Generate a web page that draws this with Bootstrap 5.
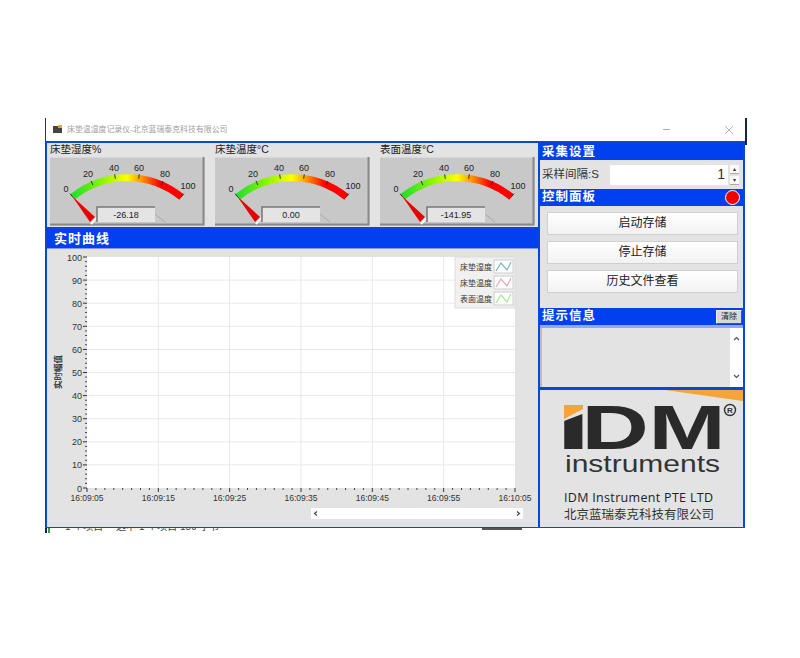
<!DOCTYPE html>
<html>
<head>
    <title>床垫温湿度记录仪</title>
    <link href="https://cdn.jsdelivr.net/npm/bootstrap@5.3.2/dist/css/bootstrap.min.css" rel="stylesheet">
    <script src="https://cdn.jsdelivr.net/npm/bootstrap@5.3.2/dist/js/bootstrap.bundle.min.js"></script>
    <style>
        body { background: #fff; font-family: "Liberation Sans", "Noto Sans CJK SC", sans-serif; color: #222; }
        .app-shell { width: 703px; margin: 118px 0 0 45px; }
        .title-strip { height: 23px; border-left: 1px solid #333; padding-left: 7px; font-size: 7.9px; color: #a0a0a0; margin-right: 0; width: 700px; }
        .title-strip .win-min { width: 7px; height: 1px; background: #aaa; margin-right: 55px; }
        .title-strip .win-close { margin-right: 12px; }
        .navy-edge { width: 2px; height: 27px; margin-bottom: -4px; background: #10264f; align-self: flex-start; }
        .main-frame { width: 700px; height: 387px; background: #0a46d8; border: 2px solid #0a46d8; border-bottom-width: 1px; gap: 2px; }
        .left-pane { width: 491px; }
        .right-pane { width: 203px; }
        .gauge-row { height: 84px; background: #e3e3e3; padding-left: 3px; gap: 9px; }
        .gauge-box { width: 156px; }
        .gauge-name { height: 14px; font-size: 10.5px; line-height: 13px; }
        .blue-head { background: #0040ee; color: #fff; font-family: "Liberation Serif", "Noto Sans CJK SC", serif; font-weight: 700; letter-spacing: 1px; }
        .head-big { height: 20px; font-size: 13px; line-height: 20px; padding-left: 7px; margin-top: 2px; border-bottom: 1px solid #7d9cf0; }
        .head-small { height: 17px; font-size: 12.5px; line-height: 19px; padding-left: 2px; }
        .chart-pane { height: 278px; background: #e3e3e3; }
        .sample-row { height: 29px; background: #e3e3e3; padding: 0 4px 0 2px; font-size: 11.5px; color: #333; }
        .sample-row span.sample-label { width: 69px; }
        .sample-input.form-control { width: 118px; height: 20px; border: 0; border-radius: 0; padding: 0 3px 0 0; font-size: 14px; text-align: right; color: #333; background: #fff; }
        .spin-wrap { width: 9px; margin-left: 2px; gap: 2px; }
        .spin-btn { height: 9px; background: #fafafa; border-bottom: 1px solid #aaa; font-size: 6px; line-height: 9px; text-align: center; color: #333; }
        .control-body { height: 102px; background: #e3e3e3; padding: 6px 5px 0 7px; gap: 6px; }
        .store-btn.btn { height: 23px; padding: 0; font-size: 12px; line-height: 21px; color: #222; background: linear-gradient(#fff, #f2f2f2); border: 1px solid #d0d0d0; border-radius: 0; }
        .red-lamp { width: 15px; height: 15px; border-radius: 50%; background: #f00000; border: 1px solid #fff; margin-right: 3px; }
        .clear-btn.btn { width: 26px; height: 14px; padding: 0; font-size: 8px; line-height: 12px; color: #222; background: #d8d8d8; border: 1px solid #777; border-color: #eee #555 #555 #eee; border-radius: 0; margin-right: 1px; font-family: "Liberation Sans", "Noto Sans CJK SC", sans-serif; letter-spacing: 0; font-weight: 400; }
        .note-area { height: 62px; background: #fff; border-top: 3px solid #8fa9ee; }
        .note-text { width: 190px; background: #e3e3e3; border-left: 2px solid #bbb; }
        .note-scroll { width: 13px; }
        .logo-pane { height: 137px; background: #e3e3e3; margin-top: 3px; }
        .leftover-strip { height: 5px; overflow: hidden; font-size: 10px; line-height: 10px; color: #444; }
        .leftover-strip .corner-mark { width: 20px; height: 5px; flex-shrink: 0; background: linear-gradient(90deg, #10264f 0 2px, #fff 2px 3px, #3a9a50 3px 5px, #fff 5px); }
        .leftover-strip .status-text { width: 417px; flex-shrink: 0; margin-top: -6px; white-space: nowrap; }
        .leftover-strip .dark-bar { width: 40px; height: 2px; background: #555; }
    </style>
</head>
<body>
    <div class="app-shell">
        <div class="d-flex">
            <div class="title-strip d-flex align-items-center">
                <svg width="10" height="9" viewBox="0 0 10 9" class="me-1"><rect y="1" width="9" height="7" fill="#444"/><rect x="5" width="4" height="3" fill="#e8a040"/></svg>
                <span class="flex-grow-1">床垫温湿度记录仪-北京蓝瑞泰克科技有限公司</span>
                <span class="win-min"></span>
                <svg class="win-close" width="8" height="8" viewBox="0 0 8 8"><path d="M0 0L8 8M8 0L0 8" stroke="#b5b5b5"/></svg>
            </div>
            <div class="navy-edge"></div>
        </div>
        <div class="main-frame d-flex">
            <div class="left-pane d-flex flex-column">
                <div class="gauge-row d-flex" id="gaugeRow"></div>
                <div class="blue-head head-big">实时曲线</div>
                <div class="chart-pane"><svg id="chartSvg" width="491" height="278" viewBox="0 0 491 278"></svg></div>
            </div>
            <div class="right-pane d-flex flex-column">
                <div class="blue-head head-small">采集设置</div>
                <div class="sample-row d-flex align-items-center">
                    <span class="sample-label">采样间隔:S</span>
                    <input class="sample-input form-control" type="text" value="1">
                    <div class="spin-wrap d-flex flex-column">
                        <div class="spin-btn">▴</div>
                        <div class="spin-btn">▾</div>
                    </div>
                </div>
                <div class="blue-head head-small d-flex justify-content-between align-items-center">
                    <span>控制面板</span><span class="red-lamp"></span>
                </div>
                <div class="control-body d-flex flex-column">
                    <button class="store-btn btn">启动存储</button>
                    <button class="store-btn btn">停止存储</button>
                    <button class="store-btn btn">历史文件查看</button>
                </div>
                <div class="blue-head head-small d-flex justify-content-between align-items-center">
                    <span>提示信息</span><button class="clear-btn btn">清除</button>
                </div>
                <div class="note-area d-flex">
                    <div class="note-text"></div>
                    <div class="note-scroll d-flex flex-column justify-content-between align-items-center py-2">
                        <svg width="7" height="5" viewBox="0 0 7 5"><path d="M1 4L3.5 1.5L6 4" fill="none" stroke="#555" stroke-width="1.2"/></svg>
                        <svg width="7" height="5" viewBox="0 0 7 5"><path d="M1 1L3.5 3.5L6 1" fill="none" stroke="#555" stroke-width="1.2"/></svg>
                    </div>
                </div>
                <div class="logo-pane">
                    <svg width="203" height="137" viewBox="0 0 203 137">
                        <polygon points="125,0 203,0 203,11" fill="#f5a437"/>
                        <text transform="translate(15,59) scale(2.1,1.08)" font-family="Liberation Sans" font-weight="700" font-size="63" fill="#2a2a2a">i</text>
                        <text transform="translate(41.5,59) scale(1.48,1)" font-family="Liberation Sans" font-weight="700" font-size="63" fill="#2a2a2a">D</text>
                        <text transform="translate(108.5,59) scale(1.47,1)" font-family="Liberation Sans" font-weight="700" font-size="63" fill="#2a2a2a">M</text>
                        <polygon points="20,0 45,0 45,23 24,31 20,31" fill="#e3e3e3"/>
                        <polygon points="24,15 43,15 43,19 24,29" fill="#f5a437"/>
                        <circle cx="190" cy="20" r="5.5" fill="none" stroke="#333" stroke-width="1.4"/>
                        <text x="190" y="23" text-anchor="middle" font-family="Liberation Sans" font-weight="700" font-size="8" fill="#333">R</text>
                        <text x="25" y="82" font-family="Liberation Sans" font-size="24" fill="#333" textLength="155" lengthAdjust="spacingAndGlyphs">instruments</text>
                        <text x="24" y="112" font-family="Open Sans" font-weight="500" font-size="12.5" fill="#222" textLength="149">IDM Instrument PTE LTD</text>
                        <text x="24" y="129" font-family="Noto Sans CJK SC" font-size="12.5" fill="#333">北京蓝瑞泰克科技有限公司</text>
                    </svg>
                </div>
            </div>
        </div>
        <div class="leftover-strip d-flex">
            <div class="corner-mark"></div>
            <div class="status-text">1 个项目　&nbsp;选中 1 个项目 189 字节</div>
            <div class="dark-bar"></div>
        </div>
    </div>

    <script>
    const gauges = [
        { name: '床垫湿度%', value: '-26.18' },
        { name: '床垫温度°C', value: '0.00' },
        { name: '表面温度°C', value: '-141.95' }
    ];
    const labelPos = [[16, 35], [38, 20], [64, 14], [89, 14], [115, 20], [138, 32]];

    function gaugeSvg(g, idx) {
        let ticks = '';
        for (let i = 0; i <= 5; i++) {
            const a = (-39 + 15.6 * i) * Math.PI / 180;
            ticks += `<line x1="${77 + 86 * Math.sin(a)}" y1="${107 - 86 * Math.cos(a)}" x2="${77 + 90.5 * Math.sin(a)}" y2="${107 - 90.5 * Math.cos(a)}" stroke="#333"/>`;
        }
        const labels = labelPos.map((p, i) => `<text x="${p[0]}" y="${p[1]}" text-anchor="middle" font-size="9" fill="#222">${i * 20}</text>`).join('');
        return `<svg width="155" height="69" viewBox="0 0 155 69">
            <defs><linearGradient id="arcGrad${idx}" gradientUnits="userSpaceOnUse" x1="22" y1="0" x2="132" y2="0">
                <stop offset="0" stop-color="#22dd33"/><stop offset="0.25" stop-color="#80f400"/>
                <stop offset="0.5" stop-color="#ffff00"/><stop offset="0.62" stop-color="#ffa000"/>
                <stop offset="0.8" stop-color="#ff0000"/><stop offset="1" stop-color="#ff0000"/>
            </linearGradient></defs>
            <rect width="155" height="69" fill="#c8c8c8"/>
            <path d="M0 .5H154.5" stroke="#d8d8d8"/>
            <path d="M153.5 0V68M0 67.5H154" stroke="#8a8a8a" stroke-width="2"/>
            <path d="M22.5 40A86.5 86.5 0 0 1 131.5 40" fill="none" stroke="url(#arcGrad${idx})" stroke-width="7"/>
            ${ticks}${labels}
            <polygon points="22,39 45,60 40,65" fill="#e80000"/>
            <path d="M46 61L41 67" stroke="#fff" stroke-width="2"/>
            <rect x="47" y="50" width="58" height="15" fill="#e4e4e4"/>
            <path d="M47 65V50H105" fill="none" stroke="#777" stroke-width="1.5"/>
            <path d="M105 57L115 65" stroke="#a8a8a8"/>
            <text x="76" y="61" text-anchor="middle" font-size="9" fill="#222">${g.value}</text>
        </svg>`;
    }

    document.getElementById('gaugeRow').innerHTML = gauges.map((g, i) =>
        `<div class="gauge-box"><div class="gauge-name">${g.name}</div>${gaugeSvg(g, i)}</div>`).join('');

    // chart
    const left = 40, right = 468, top_ = 8, bottom = 239;
    let s = `<rect x="${left}" y="${top_}" width="${right - left}" height="${bottom - top_}" fill="#fff"/>`;
    const stepX = (right - left) / 6, stepY = (bottom - top_) / 10;
    for (let i = 1; i < 10; i++) {
        s += `<line x1="${left}" x2="${right}" y1="${top_ + i * stepY}" y2="${top_ + i * stepY}" stroke="#e8e8ee"/>`;
    }
    const times = ['16:09:05', '16:09:15', '16:09:25', '16:09:35', '16:09:45', '16:09:55', '16:10:05'];
    for (let i = 0; i <= 6; i++) {
        const x = left + i * stepX;
        if (i > 0 && i < 6) s += `<line x1="${x}" x2="${x}" y1="${top_}" y2="${bottom}" stroke="#e8e8ee"/>`;
        s += `<line x1="${x}" x2="${x}" y1="${bottom}" y2="${bottom + 4}" stroke="#333"/>`;
        s += `<text x="${x}" y="252" text-anchor="middle" font-size="8.5" fill="#333">${times[i]}</text>`;
        if (i < 6) for (let j = 1; j < 8; j++) {
            const mx = x + j * stepX / 8;
            s += `<line x1="${mx}" x2="${mx}" y1="${bottom}" y2="${bottom + 2}" stroke="#444"/>`;
        }
    }
    for (let i = 0; i <= 10; i++) {
        const y = bottom - i * stepY;
        s += `<line x1="${left - 4}" x2="${left}" y1="${y}" y2="${y}" stroke="#333"/>`;
        s += `<text x="${left - 5}" y="${y + 3.5}" text-anchor="end" font-size="9" fill="#333">${i * 10}</text>`;
        if (i < 10) for (let j = 1; j < 5; j++) {
            const my = y - j * stepY / 5;
            s += `<line x1="${left - 2}" x2="${left}" y1="${my}" y2="${my}" stroke="#444"/>`;
        }
    }
    s += `<text transform="translate(14,123) rotate(-90)" text-anchor="middle" font-size="8.5" fill="#222" stroke="#222" stroke-width=".2">实时幅值</text>`;

    // legend
    s += `<rect x="408" y="8" width="60" height="51" fill="#f1f1f1" stroke="#ddd"/>`;
    const legend = [['床垫湿度', '#7fb2cc'], ['床垫温度', '#eaa3b5'], ['表面温度', '#a4ea8e']];
    legend.forEach((l, i) => {
        const y = 11 + i * 16;
        s += `<text x="445" y="${y + 9.5}" text-anchor="end" font-size="8" fill="#333">${l[0]}</text>`;
        s += `<rect x="447" y="${y}" width="19" height="13" fill="#fff" stroke="#ccc"/>`;
        s += `<polyline points="449,${y + 11} 454,${y + 3} 460,${y + 10} 464,${y + 2}" fill="none" stroke="${l[1]}" stroke-width="1.2"/>`;
    });

    // scrollbar
    s += `<rect x="264" y="259" width="212" height="11" fill="#fff"/>`;
    s += `<path d="M270 262.5L267.5 264.5L270 266.5" fill="none" stroke="#444" stroke-width="1.2"/>`;
    s += `<path d="M470 262.5L472.5 264.5L470 266.5" fill="none" stroke="#444" stroke-width="1.2"/>`;
    document.getElementById('chartSvg').innerHTML = s;
    </script>
</body>
</html>
